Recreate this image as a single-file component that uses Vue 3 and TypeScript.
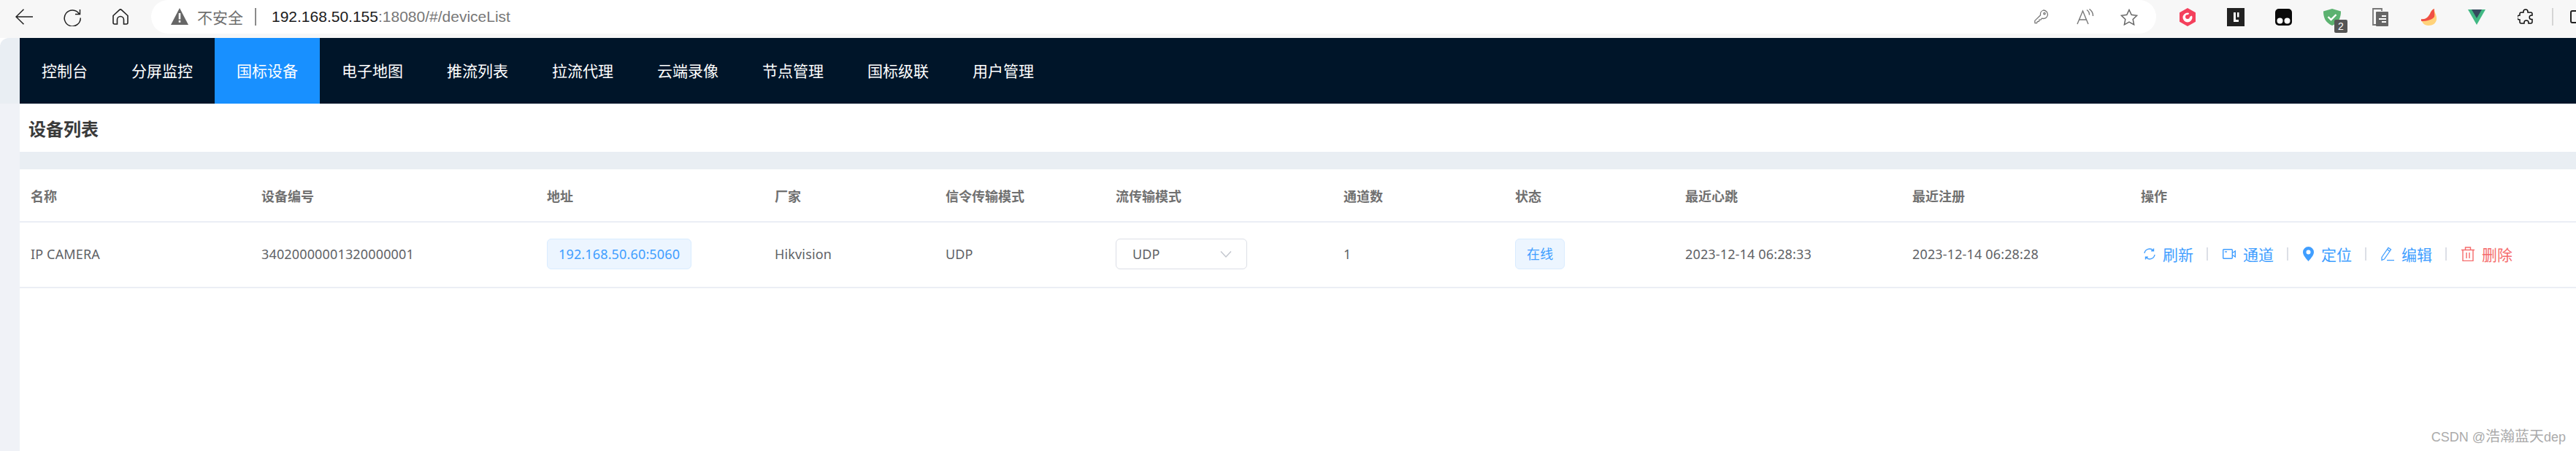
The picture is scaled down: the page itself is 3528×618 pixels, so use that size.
<script setup lang="ts">
const navItems: string[] = ['控制台', '分屏监控', '国标设备', '电子地图', '推流列表', '拉流代理', '云端录像', '节点管理', '国标级联', '用户管理']
const headers: string[] = ['名称', '设备编号', '地址', '厂家', '信令传输模式', '流传输模式', '通道数', '状态', '最近心跳', '最近注册', '操作']
</script>

<template>
  <div class="page">
    <header class="chrome">
      <div class="nav-btns">
        <svg class="i back" viewBox="0 0 24 22" fill="none" stroke="#222" stroke-width="1.5"><path d="M1 11h23M11.5 .8 1 11l10.5 10.2" /></svg>
        <svg class="i reload" viewBox="0 0 24 24" fill="none" stroke="#222" stroke-width="1.5"><path d="M21.5 7A11 11 0 1 0 23.2 12.5M22.5 1v6.5H16" /></svg>
        <svg class="i home" viewBox="0 0 22 22" fill="none" stroke="#222" stroke-width="1.6"><path d="M1 9.5 9.5 1.6a2.2 2.2 0 0 1 3 0L21 9.5V19a2 2 0 0 1-2 2h-3.5v-6a4.5 4.5 0 0 0-9 0v6H3a2 2 0 0 1-2-2Z" /></svg>
      </div>
      <div class="omnibox">
        <svg class="warn" viewBox="0 0 24 23"><path d="M12 0 24 23H0Z" fill="#666" /><path d="M10.7 7h2.6v8.5h-2.6zM10.7 17h2.6v2.8h-2.6z" fill="#fff" /></svg>
        <span class="insecure">不安全</span>
        <span class="omni-sep"></span>
        <span class="url"><b>192.168.50.155</b>:18080/#/deviceList</span>
        <span class="omni-icons">
          <svg class="key" viewBox="0 0 20 20" fill="none" stroke="#777" stroke-width="1.3"><path d="M12.5 1a6 6 0 0 1 6 6 6 6 0 0 1-6 5.5l-2-.4-1.5 2H7l-.6 2.3-2 .2-.9 2H1l-.2-3.2 7.8-7.6A6 6 0 0 1 12.5 1Z" /><circle cx="14" cy="5.6" r="1.2" /></svg>
          <svg class="read" viewBox="0 0 24 22" fill="none" stroke="#777" stroke-width="1.4"><path d="M1 21 8.500 3l7.500 18M3.800 15h9.600M14 1.500a8 8 0 0 1 3.500 7M17.500 .5a11 11 0 0 1 5 9.500" /></svg>
          <svg class="star" viewBox="0 0 24 23" fill="none" stroke="#666" stroke-width="1.5"><path d="m12 1.500 3.200 6.800 7.500 1-5.500 5.100 1.400 7.400-6.600-3.600-6.600 3.600 1.400-7.400L1.300 9.300l7.500-1Z" /></svg>
        </span>
      </div>
      <div class="exts">
        <svg class="ext e1" viewBox="0 0 22 25"><path d="M11 0 22 6.200v12.600L11 25 0 18.800V6.200Z" fill="#f4405c" /><path d="M11 6.500a6.500 6.500 0 1 0 6.500 6.500c0-1-.2-1.800-.6-2.600L13 12.500l-2-2 2.300-3.500A6 6 0 0 0 11 6.500Z" fill="#fff" /><circle cx="11" cy="12" r="3" fill="#f4405c" /></svg>
        <svg class="ext e2" viewBox="0 0 24 25"><rect width="24" height="25" fill="#222" /><path d="M9 6h3v10h4v3H9ZM14 6h2.500v6.500H14Z" fill="#fff" /></svg>
        <svg class="ext e3" viewBox="0 0 23 23"><rect width="23" height="23" rx="5" fill="#0a0a0a" /><circle cx="6.500" cy="16.500" r="4" fill="#fff" /><circle cx="16.500" cy="16.500" r="4" fill="#fff" /></svg>
        <span class="ext-badged">
          <svg class="ext e4" viewBox="0 0 24 23"><path d="M12 0 24 3.500c0 9-3 15.500-12 19.500C3 19 0 12.500 0 3.500Z" fill="#5cb270" /><path d="m6.500 11 4 4 7-7" fill="none" stroke="#fff" stroke-width="2.400" /></svg>
          <span class="badge">2</span>
        </span>
        <svg class="ext e5" viewBox="0 0 22 25"><path d="M5 23H1V1h12v3" fill="none" stroke="#777" stroke-width="1.800" /><rect x="5" y="5" width="17" height="20" rx="1" fill="#666" /><path d="M13 10h6v2h-6zM9 14h10v2H9zM13 18h6v2h-6z" fill="#fff" /></svg>
        <svg class="ext e6" viewBox="0 0 22 23"><path d="M0 14c6 1 9-2 12-7 1-3 3-6 6-7-1 3 4 9 3 15-1 5-5 8-11 8-6 0-9-4-10-9Z" fill="#ffd27a" /><path d="M0 14c6 1 9-2 12-7 1-3 3-6 6-7-1 3 1 7 0 11-3 4-10 6-18 6Z" fill="#f04f45" /></svg>
        <svg class="ext e7" viewBox="0 0 24 21"><path d="M0 0h24L12 21Z" fill="#41b883" /><path d="M5 0h14l-7 12Z" fill="#35495e" /></svg>
        <svg class="ext e8" viewBox="0 0 22 22" fill="none" stroke="#111" stroke-width="1.500"><path d="M8 4a3 3 0 0 1 6 0v1h4a2 2 0 0 1 2 2v2h-1a2.800 2.800 0 0 0 0 5.600h1V18a2 2 0 0 1-2 2h-3v-1a3 3 0 0 0-6 0v1H5a2 2 0 0 1-2-2v-3H2.500a3 3 0 0 1 0-6H3V7a2 2 0 0 1 2-2h3Z" /></svg>
        <span class="ext-sep"></span>
        <span class="ext-square"></span>
      </div>
    </header>

    <div class="body">
      <aside class="strip"></aside>
      <main class="main">
        <nav class="menu">
          <a v-for="item in navItems" :key="item" class="menu-item" :class="{ active: item === '国标设备' }">{{ item }}</a>
        </nav>
        <div class="title-bar">设备列表</div>
        <div class="band"></div>
        <div class="table">
          <div class="row head">
            <div v-for="h in headers" :key="h" class="cell">{{ h }}</div>
          </div>
          <div class="row data">
            <div class="cell">IP CAMERA</div>
            <div class="cell">34020000001320000001</div>
            <div class="cell"><span class="tag addr">192.168.50.60:5060</span></div>
            <div class="cell">Hikvision</div>
            <div class="cell">UDP</div>
            <div class="cell">
              <div class="select">
                <span>UDP</span>
                <svg class="chev" viewBox="0 0 16 10" fill="none" stroke="#c0c4cc" stroke-width="1.300"><path d="M1 1.500 8 9l7-7.500" /></svg>
              </div>
            </div>
            <div class="cell">1</div>
            <div class="cell"><span class="tag">在线</span></div>
            <div class="cell">2023-12-14 06:28:33</div>
            <div class="cell">2023-12-14 06:28:28</div>
            <div class="cell actions">
              <a class="act">
                <svg class="ai" viewBox="0 0 16 16" fill="none" stroke="#409eff" stroke-width="1.400"><path d="M1 7a7 7 0 0 1 12-3.700M15 9a7 7 0 0 1-12 3.700M13.500 .5v3.300h-3.300M2.500 15.500v-3.300h3.300" /></svg>
                刷新
              </a>
              <i class="sep"></i>
              <a class="act">
                <svg class="ai wide" viewBox="0 0 18 14" fill="none" stroke="#409eff" stroke-width="1.400"><rect x=".7" y=".7" width="12.600" height="12.600" rx="1" /><path d="M13.500 5.500 17.300 3v8l-3.800-2.500" /><path d="M3 4h3" /></svg>
                通道
              </a>
              <i class="sep"></i>
              <a class="act">
                <svg class="ai pin" viewBox="0 0 15 20"><path fill-rule="evenodd" d="M7.500 0A7.500 7.500 0 0 1 15 7.500C15 12 10 17 7.500 20 5 17 0 12 0 7.500A7.500 7.500 0 0 1 7.500 0Zm0 4.500a3 3 0 1 0 0 6 3 3 0 0 0 0-6Z" fill="#409eff" /></svg>
                定位
              </a>
              <i class="sep"></i>
              <a class="act">
                <svg class="ai edit" viewBox="0 0 18 20" fill="none" stroke="#409eff" stroke-width="1.300"><path d="M1 14.500 10 1.500l3.500 2.500-9 13-3.500 1.500ZM8.500 3.700 12 6.200M8 18.700h10" /></svg>
                编辑
              </a>
              <i class="sep"></i>
              <a class="act danger">
                <svg class="ai trash" viewBox="0 0 18 20" fill="none" stroke="#f56c6c" stroke-width="1.400"><path d="M0 4.500h18M5.500 4.500V1h7v3.500M2 4.500v15h14v-15M7 8v8M11 8v8" /></svg>
                删除
              </a>
            </div>
          </div>
        </div>
      </main>
    </div>
    <div class="watermark">CSDN @<span class="wm-cjk">浩瀚蓝天</span>dep</div>
  </div>
</template>

<style>
html, body { margin: 0; padding: 0; background: #fff; overflow: hidden; }
</style>

<style scoped>
.page {
  position: relative;
  width: 3528px;
  height: 618px;
  overflow: hidden;
  display: flex;
  flex-direction: column;
  font-family: "Noto Sans", "Noto Sans CJK SC", sans-serif;
  background: #fff;
}
.chrome {
  height: 52px;
  flex: none;
  display: flex;
  background: #f7f7f7;
}
.nav-btns {
  width: 207px;
  flex: none;
  display: flex;
  align-items: center;
  padding-left: 21px;
  box-sizing: border-box;
}
.i { display: block; flex: none; }
.back { width: 24px; height: 22px; margin-top: -6px; }
.reload { width: 24px; height: 24px; margin-left: 42px; margin-top: -5px; }
.home { width: 22px; height: 22px; margin-left: 43px; margin-top: -6px; }
.omnibox {
  width: 2746px;
  height: 46px;
  flex: none;
  box-sizing: border-box;
  background: #fff;
  border-radius: 23px;
  display: flex;
  align-items: center;
  padding-left: 27px;
  font-family: "Liberation Sans", "Noto Sans CJK SC", sans-serif;
  font-size: 21px;
}
.warn { width: 24px; height: 23px; flex: none; margin-top: -1px; }
.insecure { margin-left: 12px; color: #6e6e6e; }
.omni-sep { width: 2px; height: 24px; background: #8a8a8a; margin: 0 21px 0 16px; }
.url { color: #777; }
.url b { color: #1a1a1a; font-weight: 400; }
.omni-icons { margin-left: auto; display: flex; align-items: center; padding-right: 25px; }
.key { width: 20px; height: 20px; }
.read { width: 24px; height: 22px; margin-left: 38px; }
.star { width: 24px; height: 23px; margin-left: 36px; }
.exts { flex: 1; display: flex; align-items: center; padding-bottom: 6px; }
.ext { display: block; flex: none; }
.e1 { width: 22px; height: 25px; margin-left: 32px; }
.e2 { width: 24px; height: 25px; margin-left: 43px; }
.e3 { width: 23px; height: 23px; margin-left: 42px; }
.ext-badged { position: relative; margin-left: 43px; width: 24px; height: 23px; }
.e4 { width: 24px; height: 23px; }
.badge {
  position: absolute;
  left: 15px;
  top: 15px;
  width: 18px;
  height: 18px;
  border-radius: 2px;
  background: #555;
  color: #fff;
  font: 14px/18px "Liberation Sans", sans-serif;
  text-align: center;
}
.e5 { width: 22px; height: 25px; margin-left: 43px; }
.e6 { width: 22px; height: 23px; margin-left: 45px; }
.e7 { width: 24px; height: 21px; margin-left: 42px; }
.e8 { width: 22px; height: 22px; margin-left: 44px; }
.ext-sep { width: 2px; height: 24px; background: #d5d5d5; margin-left: 25px; flex: none; }
.ext-square {
  width: 20px;
  height: 18px;
  flex: none;
  margin-left: 23px;
  border: 2px solid #222;
  border-radius: 3px;
  box-sizing: border-box;
}
.body { flex: 1; display: flex; min-height: 0; }
.strip {
  width: 27px;
  flex: none;
  background: linear-gradient(#e9eef3 0, #e9eef3 90px, #f0f2f7 90px);
  border-top-left-radius: 12px;
}
.main { flex: 1; min-width: 0; background: #fff; }
.menu { height: 90px; display: flex; background: #001529; }
.menu-item {
  width: auto;
  padding: 0 30px;
  line-height: 90px;
  color: #fff;
  font-size: 21px;
}
.menu-item.active { background: #1890ff; }
.title-bar {
  height: 66px;
  box-sizing: border-box;
  padding-left: 12px;
  line-height: 70px;
  font-size: 24px;
  font-weight: 700;
  color: #3a3a3a;
}
.band { height: 24px; background: #e9eef3; }
.row {
  display: grid;
  grid-template-columns: 316px 391px 312px 234px 233px 312px 235px 233px 311px 313px 1fr;
  box-sizing: border-box;
  border-bottom: 2px solid #ebeef5;
  align-items: center;
}
.cell { padding-left: 15px; white-space: nowrap; font-size: 18px; color: #606266; }
.head { height: 73px; }
.head .cell { font-weight: 700; color: #707070; }
.data { height: 90px; padding-bottom: 2px; }
.data .cell { letter-spacing: .15px; }
.tag {
  display: inline-block;
  height: 42px;
  line-height: 40px;
  padding: 0 15px;
  box-sizing: border-box;
  border: 1.5px solid #d9ecff;
  border-radius: 6px;
  background: #ecf5ff;
  color: #409eff;
  vertical-align: middle;
}
.select {
  width: 180px;
  height: 42px;
  box-sizing: border-box;
  border: 1.5px solid #dcdfe6;
  border-radius: 6px;
  display: flex;
  align-items: center;
  justify-content: space-between;
  padding: 0 20px 0 22px;
}
.chev { width: 16px; height: 10px; }
.data .actions { display: flex; align-items: center; padding-left: 19px; letter-spacing: 0; }
.act {
  display: inline-flex;
  align-items: center;
  gap: 10px;
  font-size: 21px;
  color: #409eff;
  white-space: nowrap;
}
.danger { color: #f56c6c; }
.ai { width: 16px; height: 16px; flex: none; }
.ai.wide { width: 18px; height: 14px; }
.ai.pin { width: 15px; height: 20px; }
.ai.edit { width: 18px; height: 20px; }
.ai.trash { width: 18px; height: 20px; }
.sep { width: 2px; height: 18px; background: #dcdfe6; margin: 0 20px 0 18px; flex: none; }
.watermark {
  position: absolute;
  right: 14px;
  bottom: 8px;
  font: 18px/22px "Liberation Sans", "Noto Sans CJK SC", sans-serif;
  color: #ababab;
}
.wm-cjk { font-size: 20px; }
</style>
